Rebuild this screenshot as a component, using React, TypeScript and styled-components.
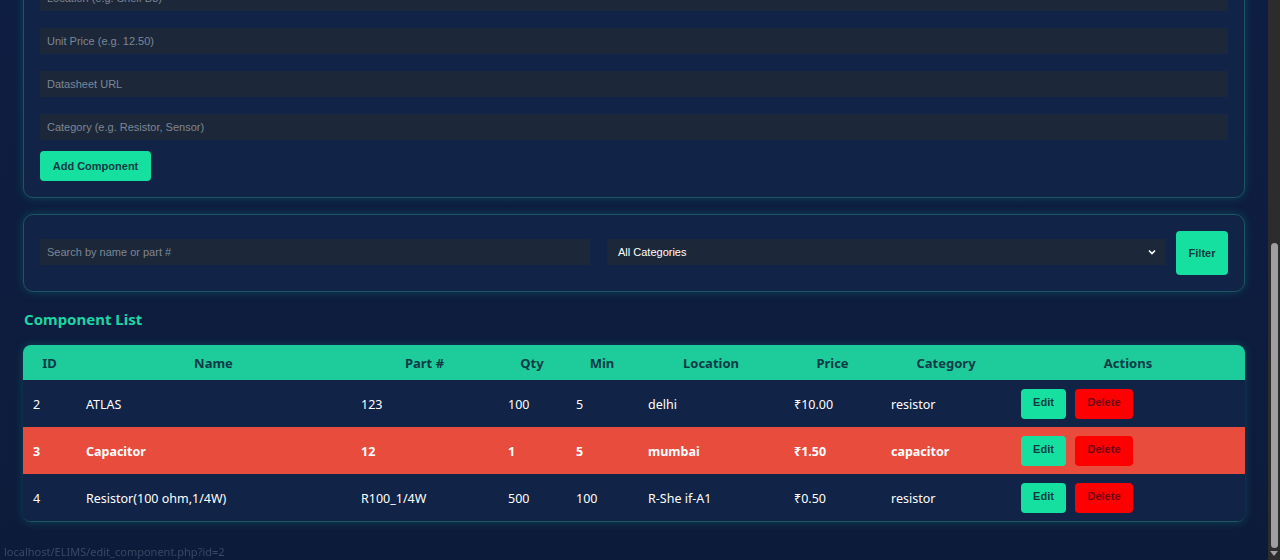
import React from "react";
import styled, { createGlobalStyle } from "styled-components";

const Global = createGlobalStyle`
  html, body { margin: 0; padding: 0; height: 100%; overflow: hidden; }
  body { background: #0d1b3a; font-family: "Liberation Sans", Arial, sans-serif; }
  * { box-sizing: border-box; }
`;

const Viewport = styled.div`
  display: flex;
  width: 1280px;
  height: 560px;
  overflow: hidden;
  background: linear-gradient(180deg, #0e1e42 0%, #0d1b3b 100%);
`;

const Page = styled.main`
  flex: 1;
  padding: 0 23px;
  margin-top: -32px;
  display: flex;
  flex-direction: column;
`;

const Card = styled.section`
  background: #112346;
  border: 1px solid #1b5566;
  border-radius: 10px;
  box-shadow: 0 0 10px rgba(20, 200, 170, 0.22);
  padding: 16px;
`;

const FormCard = styled(Card)`
  display: flex;
  flex-direction: column;
  gap: 17px;
  padding-bottom: 16px;
`;

const Field = styled.input`
  height: 26px;
  width: 100%;
  border: none;
  outline: none;
  background: #1c2839;
  color: #e5e7eb;
  padding: 0 7px;
  font-family: "Liberation Sans", Arial, sans-serif;
  font-size: 11px;
  &::placeholder { color: #7d8696; }
`;

const PrimaryButton = styled.button<{ $h?: number; $w?: number }>`
  height: ${(p) => p.$h ?? 30}px;
  width: ${(p) => (p.$w ? p.$w + "px" : "auto")};
  padding: 0 12px;
  border: none;
  border-radius: 4px;
  background: #15e0a0;
  color: #0e3b3f;
  font-family: "Liberation Sans", Arial, sans-serif;
  font-size: 11px;
  font-weight: 700;
  flex: none;
`;

const AddButton = styled(PrimaryButton)`
  align-self: flex-start;
  margin-top: -6px;
  width: 111px;
`;

const FilterCard = styled(Card)`
  margin-top: 16px;
  display: flex;
  align-items: center;
  gap: 11px;
`;

const SearchField = styled(Field)`
  width: 550px;
  flex: none;
  margin-right: 6px;
  margin-top: -2px;
`;

const SelectBox = styled.div`
  flex: 1;
  height: 26px;
  margin-top: -2px;
  background: #1c2839;
  color: #ffffff;
  font-size: 11px;
  display: flex;
  align-items: center;
  justify-content: space-between;
  padding: 0 8px 0 11px;
`;

const Heading = styled.h2`
  margin: 17px 0 0 1px;
  font-family: "Noto Sans", "Open Sans", sans-serif;
  font-size: 15px;
  font-weight: 700;
  color: #1fd4a2;
  line-height: 20px;
`;

const TableWrap = styled.div`
  margin-top: 16px;
  border-radius: 8px;
  overflow: hidden;
  box-shadow: 0 0 10px rgba(20, 200, 170, 0.25);
  border-bottom: 1px solid #1b5566;
`;

const Table = styled.table`
  width: 100%;
  border-collapse: collapse;
  table-layout: fixed;
  font-family: "Noto Sans", "Open Sans", sans-serif;
  font-size: 12.5px;
`;

const Th = styled.th`
  height: 35px;
  background: #1ecb9b;
  color: #0c3b47;
  font-weight: 700;
  font-size: 13px;
  text-align: center;
  padding: 0 10px;
`;

const Row = styled.tr<{ $alert?: boolean }>`
  background: ${(p) => (p.$alert ? "#e74c3c" : "#112346")};
  color: #ffffff;
  font-weight: ${(p) => (p.$alert ? 700 : 400)};
`;

const Td = styled.td`
  height: 47px;
  padding: 2px 10px 0;
  vertical-align: middle;
  white-space: nowrap;
`;

const Actions = styled.div`
  display: flex;
  gap: 9px;
  margin-top: -2px;
`;

const SmallButton = styled.button<{ $danger?: boolean }>`
  height: 30px;
  width: ${(p) => (p.$danger ? 58 : 45)}px;
  border: none;
  border-radius: 4px;
  background: ${(p) => (p.$danger ? "#ff0000" : "#15e0a0")};
  color: ${(p) => (p.$danger ? "#6e0014" : "#0e3b3f")};
  font-family: "Liberation Sans", Arial, sans-serif;
  font-size: 11px;
  font-weight: 700;
  padding: 0 0 3px;
`;

const Scrollbar = styled.div`
  width: 12px;
  flex: none;
  background: #2c2c2c;
  display: flex;
  flex-direction: column;
  align-items: center;
  padding-top: 243px;
`;

const Thumb = styled.div`
  width: 7px;
  height: 305px;
  background: #9f9f9f;
  border-radius: 4px;
`;

const Arrow = styled.div`
  margin-top: 3px;
  width: 0;
  height: 0;
  border-left: 4px solid transparent;
  border-right: 4px solid transparent;
  border-top: 5px solid #9f9f9f;
`;

const Status = styled.div`
  position: fixed;
  left: 4px;
  bottom: 1px;
  font-family: "Noto Sans", sans-serif;
  font-size: 11px;
  color: #3a4862;
`;

const cols = [53, 275, 147, 68, 72, 146, 97, 130, 234];
const headers = ["ID", "Name", "Part #", "Qty", "Min", "Location", "Price", "Category", "Actions"];

const rows = [
  { id: 2, name: "ATLAS", part: "123", qty: 100, min: 5, loc: "delhi", price: "₹10.00", cat: "resistor", alert: false },
  { id: 3, name: "Capacitor", part: "12", qty: 1, min: 5, loc: "mumbai", price: "₹1.50", cat: "capacitor", alert: true },
  { id: 4, name: "Resistor(100 ohm,1/4W)", part: "R100_1/4W", qty: 500, min: 100, loc: "R-She if-A1", price: "₹0.50", cat: "resistor", alert: false },
];

export default function App() {
  return (
    <>
      <Global />
      <Viewport>
        <Page>
          <FormCard>
            <Field placeholder="Location (e.g. Shelf B3)" />
            <Field placeholder="Unit Price (e.g. 12.50)" />
            <Field placeholder="Datasheet URL" />
            <Field placeholder="Category (e.g. Resistor, Sensor)" />
            <AddButton>Add Component</AddButton>
          </FormCard>

          <FilterCard>
            <SearchField placeholder="Search by name or part #" />
            <SelectBox>
              <span>All Categories</span>
              <svg width="10" height="10" viewBox="0 0 10 10">
                <path d="M2 3.5 L5 6.5 L8 3.5" stroke="#ffffff" strokeWidth="1.6" fill="none" />
              </svg>
            </SelectBox>
            <PrimaryButton $h={44} $w={52}>Filter</PrimaryButton>
          </FilterCard>

          <Heading>Component List</Heading>

          <TableWrap>
            <Table>
              <colgroup>
                {cols.map((w, i) => (
                  <col key={i} style={{ width: w }} />
                ))}
              </colgroup>
              <thead>
                <tr>
                  {headers.map((h) => (
                    <Th key={h}>{h}</Th>
                  ))}
                </tr>
              </thead>
              <tbody>
                {rows.map((r) => (
                  <Row key={r.id} $alert={r.alert}>
                    <Td>{r.id}</Td>
                    <Td>{r.name}</Td>
                    <Td>{r.part}</Td>
                    <Td>{r.qty}</Td>
                    <Td>{r.min}</Td>
                    <Td>{r.loc}</Td>
                    <Td>{r.price}</Td>
                    <Td>{r.cat}</Td>
                    <Td>
                      <Actions>
                        <SmallButton>Edit</SmallButton>
                        <SmallButton $danger>Delete</SmallButton>
                      </Actions>
                    </Td>
                  </Row>
                ))}
              </tbody>
            </Table>
          </TableWrap>
        </Page>
        <Scrollbar>
          <Thumb />
          <Arrow />
        </Scrollbar>
      </Viewport>
      <Status>localhost/ELIMS/edit_component.php?id=2</Status>
    </>
  );
}
